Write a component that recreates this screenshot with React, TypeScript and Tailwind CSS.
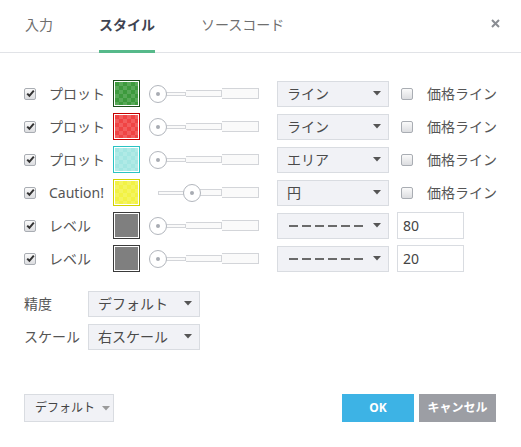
import React from "react";

type Plot = {
  label: string;
  border: string;
  fill: string;
  checker: boolean;
  value: number;
  kind: "select" | "level";
  option: string;
  level?: string;
};

const rows: Plot[] = [
  { label: "プロット", border: "border-[#1d4f1d]", fill: "bg-[#3d9a3d]", checker: true, value: 0, kind: "select", option: "ライン" },
  { label: "プロット", border: "border-[#c40000]", fill: "bg-[#f04444]", checker: true, value: 0, kind: "select", option: "ライン" },
  { label: "プロット", border: "border-[#2ac3c3]", fill: "bg-[#a3e6e2]", checker: true, value: 0, kind: "select", option: "エリア" },
  { label: "Caution!", border: "border-[#d2d200]", fill: "bg-[#f2f244]", checker: true, value: 34, kind: "select", option: "円" },
  { label: "レベル", border: "border-[#3a3a3a]", fill: "bg-[#7f7f7f]", checker: false, value: 0, kind: "level", option: "", level: "80" },
  { label: "レベル", border: "border-[#3a3a3a]", fill: "bg-[#7f7f7f]", checker: false, value: 0, kind: "level", option: "", level: "20" },
];

function CheckBox({ checked }: { checked: boolean }) {
  return (
    <div className="w-3 h-3 rounded-[2px] border border-[#a9adb3] bg-[linear-gradient(#fafafa,#dcdde0)] flex items-center justify-center">
      {checked && (
        <svg width="9" height="9" viewBox="0 0 9 9">
          <path d="M1.2 4.6 L3.4 6.8 L7.8 1.6" fill="none" stroke="#333" strokeWidth="2" />
        </svg>
      )}
    </div>
  );
}

function Arrow({ color = "#555" }: { color?: string }) {
  return (
    <svg width="8" height="5" viewBox="0 0 8 5">
      <path d="M0 0 L8 0 L4 4.5 Z" fill={color} />
    </svg>
  );
}

function Slider({ value }: { value: number }) {
  return (
    <div className="relative w-[110px] h-[18px] flex items-center pl-[9px]">
      <div className="w-[28px] h-[4px] border border-[#d3d5d9] bg-[#fafafa]" />
      <div className="w-[36px] h-[7px] border border-l-0 border-[#d3d5d9] bg-[#fafafa]" />
      <div className="w-[37px] h-[11px] border border-l-0 border-[#d3d5d9] bg-[#fafafa]" />
      <div
        className="absolute top-0 w-[18px] h-[18px] rounded-full border border-[#b2b6bd] bg-white flex items-center justify-center"
        style={{ left: value }}
      >
        <div className="w-[4px] h-[4px] rounded-full bg-[#a8acb3]" />
      </div>
    </div>
  );
}

function Select({ children, w = "w-[112px]" }: { children: React.ReactNode; w?: string }) {
  return (
    <div
      className={`${w} h-[26px] border border-[#d9dce1] bg-[#f1f2f6] flex items-center justify-between pl-[9px] pr-[7px] text-[14px] text-[#4a4a4a]`}
    >
      <span>{children}</span>
      <Arrow />
    </div>
  );
}

function Dashes() {
  return (
    <div className="flex gap-[4px] pl-[2px]">
      {[0, 1, 2, 3, 4, 5].map((i) => (
        <div key={i} className="w-[9px] h-[2px] bg-[#6a6a6a]" />
      ))}
    </div>
  );
}

export default function App() {
  return (
    <div className="w-[521px] h-[447px] bg-white text-[#444] font-['Noto_Sans','Noto_Sans_CJK_JP',sans-serif] flex flex-col">
      {/* Tabs */}
      <div className="h-[53px] border-b border-[#e1e3e7] flex items-stretch pl-[25px] pr-[21px]">
        <div className="flex gap-[46px] text-[14px] h-full">
          <div className="flex items-center pb-[4px] text-[#6f6f6f]">入力</div>
          <div className="flex items-center pb-[4px] font-bold text-[#3f4452] border-b-[3px] border-[#56b98a] -mb-[1px] pt-[3px]">
            スタイル
          </div>
          <div className="flex items-center pb-[4px] text-[#6f6f6f]">ソースコード</div>
        </div>
        <div className="ml-auto flex items-center pb-[6px]">
          <svg width="9" height="9" viewBox="0 0 9 9">
            <path d="M1 1 L8 8 M8 1 L1 8" stroke="#8a8d93" strokeWidth="2" />
          </svg>
        </div>
      </div>

      {/* Plot rows */}
      <div className="flex flex-col gap-[6px] pt-[27px] pl-[24px]">
        {rows.map((r, i) => (
          <div key={i} className="h-[27px] flex items-center">
            <CheckBox checked />
            <div className="w-[77px] pl-[13px] text-[14px] text-[#555] whitespace-nowrap">{r.label}</div>
            <div className={`w-[27px] h-[27px] border ${r.border} p-[1px] bg-white`}>
              {r.checker ? (
                <div
                  className={`w-full h-full ${r.fill} bg-[image:conic-gradient(rgba(255,255,255,0.14)_25%,transparent_0_50%,rgba(255,255,255,0.14)_0_75%,transparent_0)] bg-size-[8px_8px]`}
                />
              ) : (
                <div className={`w-full h-full ${r.fill}`} />
              )}
            </div>
            <div className="ml-[9px]">
              <Slider value={r.value} />
            </div>
            <div className="ml-[18px]">
              {r.kind === "select" ? <Select>{r.option}</Select> : <Select><Dashes /></Select>}
            </div>
            {r.kind === "select" ? (
              <div className="flex items-center ml-[12px]">
                <CheckBox checked={false} />
                <span className="ml-[14px] text-[14px] text-[#555]">価格ライン</span>
              </div>
            ) : (
              <div className="ml-[8px] w-[67px] h-[27px] border border-[#d9dce1] bg-white flex items-center pl-[5px] text-[14px] text-[#444]">
                {r.level}
              </div>
            )}
          </div>
        ))}
      </div>

      {/* Precision / scale */}
      <div className="flex flex-col gap-[6px] pt-[18px] pl-[24px]">
        <div className="h-[27px] flex items-center">
          <div className="w-[64px] text-[14px] text-[#555]">精度</div>
          <Select>デフォルト</Select>
        </div>
        <div className="h-[27px] flex items-center">
          <div className="w-[64px] text-[14px] text-[#555]">スケール</div>
          <Select>右スケール</Select>
        </div>
      </div>

      {/* Footer */}
      <div className="mt-[44px] flex items-center pl-[24px] pr-[25px]">
        <div className="w-[90px] h-[28px] border border-[#d9dce1] bg-[#f1f2f6] flex items-center gap-[7px] pl-[10px] text-[12px] text-[#444]">
          <span>デフォルト</span>
          <Arrow color="#9a9a9a" />
        </div>
        <div className="ml-auto flex gap-[5px]">
          <div className="w-[72px] h-[28px] bg-[#3db3e5] text-white text-[12px] font-bold flex items-center justify-center">
            OK
          </div>
          <div className="w-[77px] h-[28px] bg-[#9c9ea4] text-white text-[12px] font-bold flex items-center justify-center">
            キャンセル
          </div>
        </div>
      </div>
    </div>
  );
}
